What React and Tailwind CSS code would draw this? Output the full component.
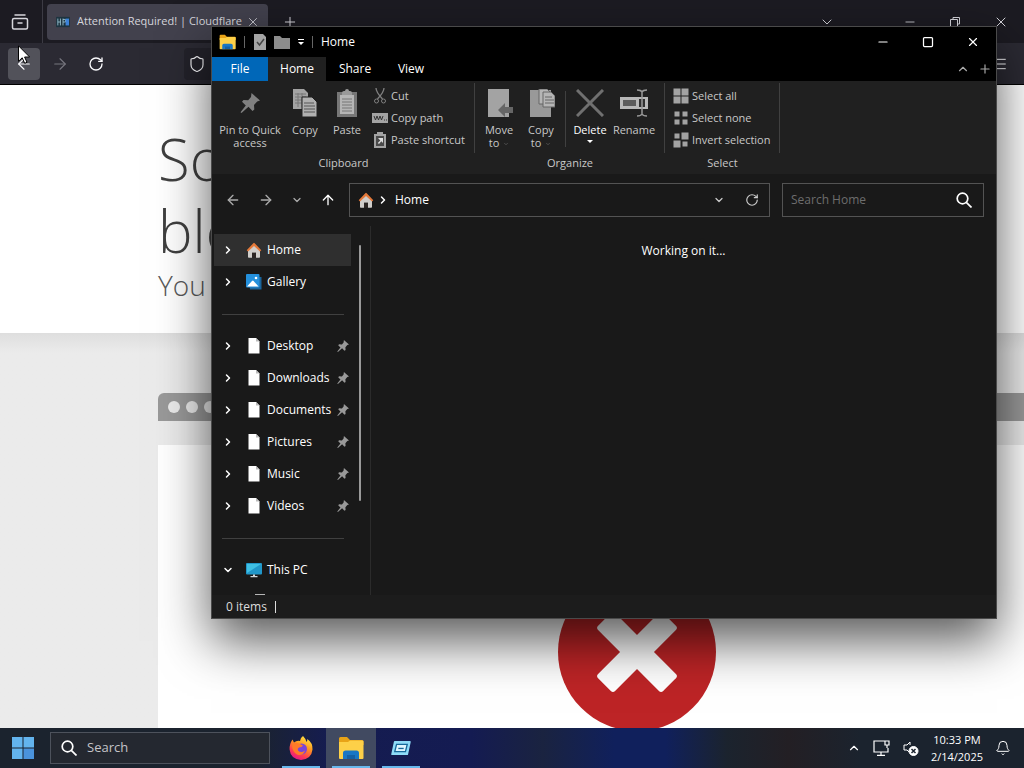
import { ArrowLeft, ArrowRight, ArrowUp, Bell, ChevronDown, ChevronRight, ChevronUp, Menu, Minus, Plus, RotateCw, Shield, Square, X } from "lucide-react";

const quickAccess = ["Desktop", "Downloads", "Documents", "Pictures", "Music", "Videos"];

const FolderIcon = ({ className }) => (
  <svg viewBox="0 0 26 24" className={className}>
    <path d="M1 2.500Q1 1 2.500 1H9l3 3h12q1.500 0 1.500 1.500V9H1z" fill="#e8a317" />
    <path d="M1 6h9l2-1.500h12.500q1 0 1 1V22q0 1-1 1H2q-1 0-1-1z" fill="#fdd048" />
    <path d="M5 23v-6q0-2.500 2.500-2.500h11Q21 14.500 21 17v6h-4v-3H9v3z" fill="#1976c5" />
    <path d="M9 19h8v4H9z" fill="#1460a5" />
  </svg>
);

const SearchIcon = ({ className }) => (
  <svg viewBox="0 0 16 16" className={className} fill="none" stroke="currentColor" strokeWidth="1.700">
    <circle cx="6.500" cy="6.500" r="5.300" />
    <path d="m10.300 10.300 5.200 5.200" />
  </svg>
);

const ScissorsIcon = () => (
  <svg viewBox="0 0 16 16" className="size-4" fill="none" stroke="#808080">
    <path d="M4 0q0 4 6.500 11M12 0q0 4-6.500 11" strokeWidth="1.300" />
    <circle cx="4.500" cy="13" r="2" />
    <circle cx="11.500" cy="13" r="2" />
  </svg>
);

const HouseIcon = ({ className }) => (
  <svg viewBox="0 0 16 16" className={className}>
    <path d="M2 8.500 8 3l6 5.500V15q0 .8-.8.8H10v-5H6v5H2.800Q2 15.800 2 15z" fill="#d0cdca" />
    <path d="M.7 8.300 7.300 1.200q.7-.7 1.400 0l6.600 7.100-1.300 1.300L8 4 2 9.600z" fill="#e4793a" />
    <path d="M6 10.800h4v5H6z" fill="#2b2523" />
  </svg>
);

const GalleryIcon = () => (
  <svg viewBox="0 0 16 16" className="size-4">
    <path d="M3 3h12.500v12.500H4z" fill="#1a659c" />
    <rect width="13.500" height="13.500" rx="1" fill="#2490dc" />
    <path d="m1 12.500 5-5.500q.8-.8 1.600 0l5 5.500z" fill="#fff" />
    <circle cx="10" cy="4" r="1.300" fill="#fff" />
  </svg>
);

const MonitorIcon = () => (
  <svg viewBox="0 0 16 16" className="size-4">
    <rect y="1" width="16" height="11.500" rx="1" fill="#2197c9" />
    <path d="M1 2h14L1 11z" fill="#3fc0e4" />
    <path d="M7 12.500h2V14h2.500v1.200h-7V14H7z" fill="#cfd6da" />
  </svg>
);

const DriveIcon = () => (
  <svg viewBox="0 0 16 16" className="size-4">
    <path d="M3 0h10v16H3z" fill="#b5b5b5" />
  </svg>
);

const FileIcon = () => (
  <svg viewBox="0 0 16 16" className="size-4">
    <path d="M2.500 0h7.500l3.500 3.500V15.500h-11z" fill="#fff" />
    <path d="M10 0v3.500h3.500z" fill="#bbb" />
  </svg>
);

const PinIcon = ({ className }) => (
  <svg viewBox="0 0 20 20" className={className} fill="currentColor">
    <path d="m11.500 0 8.500 7.500-2.800 1-3.200 3.500.3 4.500-1.800 1.500-4-4.300L1.500 20 .5 19.200l5.300-6.700L2 8.800l1.500-1.700 4.700.2L11 4z" />
  </svg>
);

const CopyIcon = () => (
  <svg viewBox="0 0 26 28" className="h-7 w-[26px]">
    <path d="M1 0h11l4 4v16H1z" fill="#a3a3a3" />
    <path d="M3 5h11M3 8h11M3 11h11M3 14h11M6 4v14M10 4v14" stroke="#777" />
    <path d="M10 8h10l5 5v15H10z" fill="#b0b0b0" stroke="#202020" />
    <path d="M12 14h10M12 17h11M12 20h11M12 23h11" stroke="#555" />
  </svg>
);

const PasteIcon = () => (
  <svg viewBox="0 0 22 28" className="h-7 w-[22px]">
    <path d="M1 3h20v25H1z" fill="#777" />
    <path d="M4 6h14v19H4z" fill="#b5b5b5" />
    <path d="M6 4q0-2 2-2h1q0-2 2-2t2 2h1q2 0 2 2v2H6z" fill="#999" />
    <path d="M6 10h10M6 13h10M6 16h10M6 19h10M6 22h10" stroke="#777" />
  </svg>
);

const MoveToIcon = () => (
  <svg viewBox="0 0 28 28" className="size-7">
    <path d="M3 0h21v28H3z" fill="#a3a3a3" />
    <path d="m13 21 7-7v4h8v6h-8v4z" fill="#666" />
  </svg>
);

const CopyToIcon = () => (
  <svg viewBox="0 0 28 28" className="size-7">
    <path d="M3 1h21v27H3z" fill="#999" />
    <path d="M12 0h8l3 3v12H12z" fill="#b5b5b5" stroke="#666" />
    <path d="M16 3h8l4 4v11H16z" fill="#b5b5b5" stroke="#666" />
    <path d="M18 8h7M18 11h9M18 14h9" stroke="#666" />
  </svg>
);

const DeleteIcon = () => (
  <svg viewBox="0 0 28 28" className="size-7" stroke="#707070" strokeWidth="3">
    <path d="m1 1 26 26M27 1 1 27" />
  </svg>
);

const RenameIcon = () => (
  <svg viewBox="0 0 28 28" className="size-7" fill="none">
    <path d="M0 8h28v12H0z" fill="#b8b8b8" />
    <path d="M3 11h13v6H3z" fill="#5c5c5c" />
    <path d="M19 10h6v8h-6z" fill="#303030" />
    <path d="M17 1q4 0 5 2 1-2 5-2M22 3v22M17 27q4 0 5-2 1 2 5 2" stroke="#999" strokeWidth="1.500" />
  </svg>
);

const CopyPathIcon = () => (
  <svg viewBox="0 0 16 16" className="size-4">
    <path d="M0 3h16v10H0z" fill="#a3a3a3" />
    <path d="m2 6 1.500 4L5 6l1.500 4L8 6l1.500 4L11 6M12 10h1M14 10h1" stroke="#333" fill="none" />
  </svg>
);

const ShortcutIcon = () => (
  <svg viewBox="0 0 16 16" className="size-4">
    <path d="M2 2h3V0h6v2h3v14H2z" fill="#a3a3a3" />
    <path d="M4 4h8v10H4z" fill="#4a4a4a" />
    <path d="M6 6h5v5L9.300 9.300 7 12l-1.200-1 2.500-2.600z" fill="#ddd" />
  </svg>
);

// kind picks which of the four tiles are drawn full size
const TilesIcon = ({ kind }) => {
  const tiles = [[0, 0], [8, 0], [0, 8], [8, 8]];
  return (
    <svg viewBox="0 0 16 16" className="size-4" fill="#a3a3a3">
      {tiles.map(([x, y], i) => {
        const big = kind === "all" || (kind === "invert" && (i === 1 || i === 2));
        const size = big ? 7 : 5;
        return <rect key={i} x={x + (big ? 0.5 : 1.5)} y={y + (big ? 0.5 : 1.5)} width={size} height={size} />;
      })}
    </svg>
  );
};

const FirefoxIcon = () => (
  <svg viewBox="0 0 24 24" className="size-6">
    <defs>
      <linearGradient id="flame" x1="0.8" y1="0" x2="0.3" y2="1">
        <stop offset="0" stopColor="#fff04a" />
        <stop offset="0.400" stopColor="#ff9a1f" />
        <stop offset="0.750" stopColor="#ff3b52" />
        <stop offset="1" stopColor="#e3158b" />
      </linearGradient>
    </defs>
    <path d="M14 0q3 3 3.500 6 1-1 .8-3Q24 7 23.500 13.500 22.500 23 12 24 1.500 23 .6 13.500.3 8 3.500 3.500L5 6.500Q8 4 11 5q0-3 3-5" fill="url(#flame)" />
    <circle cx="12.500" cy="13" r="5.500" fill="#7a45d8" />
    <path d="M3 8q4-2 8 0l3 1.500q-1 2-4 2-2 1-1 3 3 3 7 0-2 6-8 4-5-3-5-10" fill="#ff7b28" />
  </svg>
);

const RunIcon = () => (
  <svg viewBox="0 0 22 18" className="h-4 w-5">
    <path d="M4 1h17q1 0 1 1l-3 14q0 1-1 1H1q-1 0-1-1L3 2q0-1 1-1" fill="#8fdcf8" />
    <path d="M6 5h12l-2 8H4z" fill="#dff6ff" stroke="#17699a" strokeWidth="1.500" />
    <path d="M8 9.500h6" stroke="#17699a" strokeWidth="1.500" />
  </svg>
);

const BigButton = ({ icon, lines, arrow, className = "w-[42px]", active }) => (
  <button type="button" className={`flex flex-col items-center pt-0.5 leading-[13px] ${active ? "text-white" : "text-[#c8c8c8]"} ${className}`}>
    <span className="mb-1 flex h-8 items-center">{icon}</span>
    {lines.map((line) => (
      <span key={line} className="whitespace-nowrap">
        {line}
        {arrow && line === "to" && <ChevronDown className="ml-1 inline size-1.5 text-[#777]" />}
      </span>
    ))}
    {arrow && active && <span className="mt-1 border-x-[3px] border-t-[3px] border-x-transparent border-t-white" />}
  </button>
);

const SmallButton = ({ icon, label }) => (
  <button type="button" className="flex h-[22px] items-center gap-[3px] whitespace-nowrap text-[#c8c8c8]">
    {icon}
    {label}
  </button>
);

const RibbonGroup = ({ label, className, inset, children }) => (
  <section aria-label={label} className={`relative flex flex-col ${className}`}>
    <div className={`flex h-[72px] pt-1 ${inset}`}>{children}</div>
    <p className="text-center leading-5 text-[#c8c8c8]">{label}</p>
    <span className="absolute top-0.5 right-0 h-[70px] w-px bg-[#404040]" />
  </section>
);

const NavItem = ({ icon, label, pinned, open, active }) => (
  <li>
    <a href="#" className={`ml-0.5 flex h-8 w-[137px] items-center pl-2 text-white ${active ? "bg-[#2f2f2f]" : ""}`}>
      {open ? <ChevronDown className="size-3" strokeWidth={3} /> : <ChevronRight className="size-3" strokeWidth={3} />}
      <span className="ml-3 flex w-[21px]">{icon}</span>
      <span className="flex-1">{label}</span>
      {pinned && <PinIcon className="mr-0.5 size-3 text-[#999]" />}
    </a>
  </li>
);

const NavDivider = () => (
  <li className="flex h-8 items-center pr-[26px] pl-2.5">
    <hr className="w-full border-[#404040]" />
  </li>
);

const Browser = () => (
  <div className="flex h-full flex-col bg-white">
    <div className="flex h-[43px] shrink-0 items-center bg-[#1c1b22] text-[#d6d6dc]">
      <button type="button" aria-label="Recent browsing" className="flex h-full w-[43px] items-center justify-center border-r border-[#3c3b44] pr-0.5">
        <svg viewBox="0 0 18 18" className="size-[18px]" fill="none" stroke="currentColor" strokeWidth="1.500" strokeLinecap="round">
          <path d="M4 2h10M3 5.500h12q1.500 0 1.500 1.500v7.500q0 1.500-1.500 1.500H3q-1.500 0-1.500-1.500V7Q1.500 5.500 3 5.500M7 10h4" />
        </svg>
      </button>
      <div className="ml-1 flex h-[36px] w-[221px] items-center rounded bg-[#42414d] pl-2 text-[11px] text-[#d5d5dc]">
        <svg viewBox="0 0 16 14" className="mr-1.5 h-3 w-4 shrink-0">
          <path d="M0 1h16v12H0z" fill="#1d3440" />
          <path d="M2 3v8M5 3v8M2 7h3M8 3v8M8 4h3v3H8" stroke="#9cc7d6" fill="none" />
          <path d="M11 3h4v8h-4z" fill="#3b82d8" />
        </svg>
        <span className="flex-1 whitespace-nowrap">Attention Required! | Cloudflare</span>
        <button type="button" aria-label="Close tab" className="mr-2 shrink-0">
          <X className="size-3.5" strokeWidth={1.5} />
        </button>
      </div>
      <button type="button" aria-label="New tab" className="ml-3.5"><Plus className="size-4" strokeWidth={1.5} /></button>
      <div className="flex flex-1 items-center justify-end">
        <button type="button" aria-label="List all tabs" className="mr-[68px]"><ChevronDown className="size-4" strokeWidth={1.5} /></button>
        <button type="button" aria-label="Minimize browser" className="mr-8"><Minus className="size-3.5" strokeWidth={1.5} /></button>
        <button type="button" aria-label="Restore browser" className="mr-8">
          <svg viewBox="0 0 12 12" className="size-3" fill="none" stroke="currentColor">
            <path d="M1.500 3.500h7v7h-7zM4 3.500v-2h6.500V8H8.500" />
          </svg>
        </button>
        <button type="button" aria-label="Close browser" className="mr-[15px]"><X className="size-4" strokeWidth={1.5} /></button>
      </div>
    </div>

    <div className="flex h-[42px] shrink-0 items-center border-b border-black bg-[#2b2a33] pl-2 text-[#fbfbfe]">
      <button type="button" aria-label="Back" className="flex size-8 items-center justify-center rounded bg-[#52525a]"><ArrowLeft className="size-[18px]" strokeWidth={1.5} /></button>
      <button type="button" aria-label="Forward" className="ml-1 flex size-8 items-center justify-center text-[#77767f]"><ArrowRight className="size-[18px]" strokeWidth={1.5} /></button>
      <button type="button" aria-label="Reload" className="ml-1 flex size-8 items-center justify-center"><RotateCw className="size-4" /></button>
      <div className="ml-[72px] flex h-8 flex-1 items-center rounded bg-[#23222a] pl-1"><Shield className="size-[18px]" strokeWidth={1.5} /></div>
      <button type="button" aria-label="Open menu" className="mr-4 ml-8"><Menu className="size-4" strokeWidth={1.5} /></button>
    </div>

    <main className="flex min-h-0 flex-1 flex-col">
      <header className="h-[248px] shrink-0 pt-[38px] pl-[158px] text-[#404040]">
        <h1 className="text-[58px] leading-[72px] font-light">
          Sorry,
          <br />
          blocked
        </h1>
        <h2 className="text-[28px] leading-9 font-light text-[#595959]">You are</h2>
      </header>
      <div className="flex min-h-0 flex-1 flex-col bg-linear-to-b from-[#dedede] to-[#ebebeb] to-5% pt-[60px] pl-[158px]">
        <div className="flex h-7 shrink-0 items-center gap-1.5 rounded-tl-md bg-[#999] pl-2.5">
          <span className="size-3 rounded-full bg-[#ebebeb]" />
          <span className="size-3 rounded-full bg-[#ebebeb]" />
          <span className="size-3 rounded-full bg-[#ebebeb]" />
        </div>
        <div className="mt-6 flex min-h-0 flex-1 items-end overflow-hidden bg-white pl-[400px]">
          <svg viewBox="0 0 160 160" className="-mb-1 size-40 shrink-0">
            <circle cx="79" cy="80" r="79" fill="#bd2426" />
            <rect x="33" y="68" width="92" height="24" rx="3" fill="#fff" transform="rotate(45 79 80)" />
            <rect x="33" y="68" width="92" height="24" rx="3" fill="#fff" transform="rotate(-45 79 80)" />
          </svg>
        </div>
      </div>
    </main>
  </div>
);

const Explorer = () => (
  <div className="absolute top-[26px] left-[211px] flex h-[593px] w-[786px] flex-col border border-[#4a4a4a] bg-[#191919] text-[12px] text-white shadow-[0_22px_48px_rgba(0,0,0,0.65)]">
    <div className="flex h-[30px] shrink-0 items-center bg-black pl-[7px]">
      <FolderIcon className="h-4 w-[17px]" />
      <span className="mx-2 h-3 w-px bg-[#666]" />
      <button type="button" aria-label="Properties">
        <svg viewBox="0 0 14 16" className="h-4 w-3.5">
          <path d="M1 0h9l3 3v13H1z" fill="#a3a3a3" />
          <path d="m4 8 2.500 3L11 5" stroke="#444" strokeWidth="1.500" fill="none" />
        </svg>
      </button>
      <button type="button" aria-label="New folder" className="ml-[7px]">
        <svg viewBox="0 0 16 14" className="h-3.5 w-4" fill="#8c8c8c"><path d="M0 1h6l2 2h8v11H0z" /></svg>
      </button>
      <button type="button" aria-label="Customize toolbar" className="ml-2 flex flex-col items-center gap-0.5">
        <span className="h-px w-1.5 bg-white" />
        <span className="border-x-[3px] border-t-[3px] border-x-transparent border-t-white" />
      </button>
      <span className="mr-2 ml-2 h-3 w-px bg-[#666]" />
      <span>Home</span>
      <div className="flex flex-1 items-center justify-end">
        <button type="button" aria-label="Minimize" className="mr-8"><Minus className="size-3.5" strokeWidth={2} /></button>
        <button type="button" aria-label="Maximize" className="mr-8"><Square className="size-3" strokeWidth={2.5} /></button>
        <button type="button" aria-label="Close" className="mr-4"><X className="size-3.5" strokeWidth={2} /></button>
      </div>
    </div>

    <div className="flex h-6 shrink-0 items-stretch bg-black">
      <button type="button" className="w-14 bg-[#0067b8]">File</button>
      <button type="button" className="w-[58px] bg-[#202020]">Home</button>
      <button type="button" className="w-[58px]">Share</button>
      <button type="button" className="w-[54px]">View</button>
      <div className="flex flex-1 items-center justify-end gap-2 pr-1 text-[#aaa]">
        <button type="button" aria-label="Collapse ribbon"><ChevronUp className="size-3.5" strokeWidth={2} /></button>
        <button type="button" aria-label="Help"><Plus className="size-3.5" strokeWidth={2} /></button>
      </div>
    </div>

    <div className="flex h-[93px] shrink-0 bg-[#202020] text-[11px]">
      <RibbonGroup label="Clipboard" className="w-[263px]" inset="pl-1">
        <BigButton icon={<PinIcon className="size-5 text-[#808080]" />} lines={["Pin to Quick", "access"]} className="w-[68px]" />
        <BigButton icon={<CopyIcon />} lines={["Copy"]} />
        <BigButton icon={<PasteIcon />} lines={["Paste"]} />
        <div className="ml-1">
          <SmallButton icon={<ScissorsIcon />} label="Cut" />
          <SmallButton icon={<CopyPathIcon />} label="Copy path" />
          <SmallButton icon={<ShortcutIcon />} label="Paste shortcut" />
        </div>
      </RibbonGroup>
      <RibbonGroup label="Organize" className="w-[190px]" inset="pl-[3px]">
        <BigButton icon={<MoveToIcon />} lines={["Move", "to"]} arrow />
        <BigButton icon={<CopyToIcon />} lines={["Copy", "to"]} arrow />
        <span className="mx-[3px] h-14 w-px self-center bg-[#404040]" />
        <BigButton icon={<DeleteIcon />} lines={["Delete"]} arrow active />
        <BigButton icon={<RenameIcon />} lines={["Rename"]} className="w-[46px]" />
      </RibbonGroup>
      <RibbonGroup label="Select" className="w-[115px]" inset="pl-2">
        <div>
          <SmallButton icon={<TilesIcon kind="all" />} label="Select all" />
          <SmallButton icon={<TilesIcon kind="none" />} label="Select none" />
          <SmallButton icon={<TilesIcon kind="invert" />} label="Invert selection" />
        </div>
      </RibbonGroup>
    </div>

    <div className="flex h-[52px] shrink-0 items-center pr-3">
      <div className="flex w-[137px] items-center gap-[17px] pl-[13px] text-[#aaa]">
        <button type="button" aria-label="Back"><ArrowLeft className="size-4" /></button>
        <button type="button" aria-label="Forward"><ArrowRight className="size-4" /></button>
        <button type="button" aria-label="Recent locations"><ChevronDown className="size-3" strokeWidth={2.5} /></button>
        <button type="button" aria-label="Up" className="text-white"><ArrowUp className="size-4" /></button>
      </div>
      <div className="flex h-[34px] flex-1 items-center border border-[#535353] pl-2">
        <HouseIcon className="size-4" />
        <ChevronRight className="mr-1.5 ml-[3px] size-3" strokeWidth={3} />
        <a href="#" className="flex-1">Home</a>
        <button type="button" aria-label="Previous locations" className="mr-5"><ChevronDown className="size-3 text-[#ccc]" strokeWidth={2.5} /></button>
        <button type="button" aria-label="Refresh" className="mr-2.5"><RotateCw className="size-3.5 text-[#ccc]" /></button>
      </div>
      <label className="ml-3 flex h-[34px] w-[202px] items-center border border-[#535353] pr-[11px] pl-2">
        <input type="text" aria-label="Search Home" placeholder="Search Home" className="min-w-0 flex-1 bg-transparent outline-none placeholder:text-[#6d6d6d]" />
        <SearchIcon className="size-4" />
      </label>
    </div>

    <div className="flex min-h-0 flex-1">
      <nav className="relative w-[159px] overflow-hidden border-r border-[#2b2b2b] pt-2">
        <ul>
          <NavItem icon={<HouseIcon className="size-4" />} label="Home" active />
          <NavItem icon={<GalleryIcon />} label="Gallery" />
          <NavDivider />
          {quickAccess.map((name) => (
            <NavItem key={name} icon={<FileIcon />} label={name} pinned />
          ))}
          <NavDivider />
          <NavItem icon={<MonitorIcon />} label="This PC" open />
          <li className="flex h-8 items-center pl-10"><DriveIcon /></li>
        </ul>
        <span className="absolute top-[19px] right-[9px] h-64 w-0.5 rounded-full bg-[#9a9a9a]" />
      </nav>
      <p className="flex-1 pt-4 text-center">Working on it...</p>
    </div>

    <div className="flex h-[23px] shrink-0 items-center bg-[#1c1c1c] pl-3.5 text-[#ddd]">
      <span>0 items</span>
      <span className="ml-2 h-3 w-px bg-[#ddd]" />
    </div>
  </div>
);

const Taskbar = () => (
  <footer className="relative flex h-10 shrink-0 items-center bg-[linear-gradient(to_right,#1b232e_0%,#1b232e_25%,#151c50_32%,#141b52_46%,#1a2340_53%,#10205c_60%,#10205c_65%,#1b232e_71%,#231f24_77%,#1b232e_84%)] text-white">
    <button type="button" aria-label="Start" className="ml-3">
      <svg viewBox="0 0 22 22" className="size-[22px]">
        <path d="M0 0h10.500v10.500H0zM11.500 0H22v10.500H11.500zM0 11.500h10.500V22H0z" fill="#63b4ee" />
        <path d="M11.500 11.500H22V22H11.500z" fill="#4a93dc" />
      </svg>
    </button>
    <label className="ml-4 flex h-8 w-[220px] items-center border border-[#4d525c] bg-[#242830] pl-2.5">
      <SearchIcon className="size-4" />
      <input type="text" aria-label="Search" placeholder="Search" className="ml-2.5 w-40 bg-transparent text-[13px] outline-none placeholder:text-[#c4c4c8]" />
    </label>
    <div className="ml-1.5 flex h-full flex-1">
      <button type="button" aria-label="Firefox" className="flex h-full w-[50px] items-center justify-center">
        <FirefoxIcon />
      </button>
      <button type="button" aria-label="File Explorer" className="flex h-full w-[50px] items-center justify-center bg-[#414a61]">
        <FolderIcon className="h-6 w-[26px]" />
      </button>
      <button type="button" aria-label="Run" className="flex h-full w-[50px] items-center justify-center">
        <RunIcon />
      </button>
      <div className="absolute bottom-0 flex gap-3 pl-1.5">
        <span className="h-0.5 w-[38px] bg-[#68b8ec]" />
        <span className="h-0.5 w-[38px] bg-[#68b8ec]" />
        <span className="h-0.5 w-[38px] bg-[#68b8ec]" />
      </div>
    </div>
    <button type="button" aria-label="Show hidden icons"><ChevronUp className="size-3.5" strokeWidth={2} /></button>
    <svg viewBox="0 0 18 16" className="ml-3 h-4 w-[18px]" fill="none" stroke="currentColor" strokeWidth="1.200">
      <path d="M12 1H1v11h14V8M8 12v3M4 15.400h8M12 1h4v4h-4zM14 5v3" />
    </svg>
    <svg viewBox="0 0 16 16" className="ml-3 size-4" fill="none" stroke="currentColor">
      <path d="M7 2v3M7 2 4 5H1v5h3l2 2" />
      <circle cx="10.500" cy="11" r="4.500" fill="#fff" />
      <path d="m8.500 9 4 4m0-4-4 4" stroke="#1b232e" strokeWidth="1.500" />
    </svg>
    <div className="ml-3 text-center text-[11px] leading-[17px]">
      <p>10:33 PM</p>
      <p>2/14/2025</p>
    </div>
    <button type="button" aria-label="Notifications" className="mr-[13px] ml-3"><Bell className="size-4" strokeWidth={1.5} /></button>
  </footer>
);

const App = () => {
  return (
    <div className="relative flex h-screen flex-col overflow-hidden font-['Open_Sans','Noto_Sans',sans-serif]">
      <div className="relative min-h-0 flex-1 overflow-hidden">
        <Browser />
        <Explorer />
      </div>
      <Taskbar />
      <svg viewBox="0 0 12 19" className="absolute top-[45px] left-[18px] h-[19px] w-3">
        <path d="M.5.800v15.500l3.700-3.500 2.500 5.500 2.300-1-2.400-5.300h5z" fill="#fff" stroke="#000" />
      </svg>
    </div>
  );
};

export default App;
